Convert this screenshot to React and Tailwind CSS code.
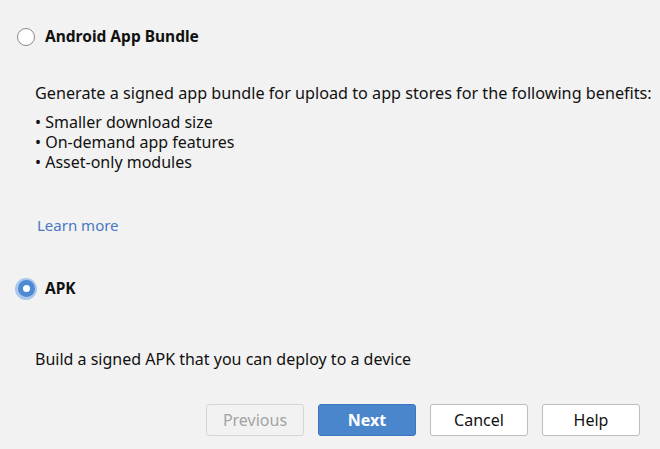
const Radio = ({ checked }) =>
  checked ? (
    <span className="flex h-[22px] w-[22px] items-center justify-center rounded-full bg-[#a9c8ec]">
      <span className="flex h-[17px] w-[17px] items-center justify-center rounded-full bg-[#4d8ad3]">
        <span className="h-[7px] w-[7px] rounded-full bg-white" />
      </span>
    </span>
  ) : (
    <span className="flex h-[22px] w-[22px] items-center justify-center">
      <span className="h-[18px] w-[18px] rounded-full border border-[#8a8a8a] bg-white" />
    </span>
  );

const Button = ({ children, variant }) => {
  const styles = {
    disabled: "border-[#d6d6d6] bg-[#f2f2f2] text-[#a3a3a3]",
    primary: "border-[#3d76bd] bg-[#4a86cb] text-white font-bold",
    normal: "border-[#bdbdbd] bg-white text-[#111]",
  };
  return (
    <button
      className={`h-[32px] w-[98px] rounded-[3px] border text-[16px] ${styles[variant]}`}
    >
      {children}
    </button>
  );
};

export default function App() {
  return (
    <div
      className="flex h-[449px] w-[660px] flex-col bg-[#f2f2f2] text-[16px] text-[#111]"
      style={{ fontFamily: '"Noto Sans", "Open Sans", sans-serif' }}
    >
      <div className="flex items-center gap-[8px] pl-[15px] pt-[25px]">
        <Radio />
        <span className="text-[15.5px] font-bold">Android App Bundle</span>
      </div>

      <div className="pl-[35px] pt-[35px] leading-[20px]">
        <p className="text-[16.2px]">
          Generate a signed app bundle for upload to app stores for the following benefits:
        </p>
        <ul className="mt-[9px]">
          <li>• Smaller download size</li>
          <li>• On-demand app features</li>
          <li>• Asset-only modules</li>
        </ul>
        <a className="mt-[43px] block pl-[2px] text-[15px] text-[#4a78c2]">Learn more</a>
      </div>

      <div className="flex items-center gap-[8px] pl-[15px] pt-[42px]">
        <Radio checked />
        <span className="text-[15.5px] font-bold">APK</span>
      </div>

      <p className="pl-[35px] pt-[48px] leading-[20px]">
        Build a signed APK that you can deploy to a device
      </p>

      <div className="flex justify-end gap-[14px] pr-[20px] pt-[35px]">
        <Button variant="disabled">Previous</Button>
        <Button variant="primary">Next</Button>
        <Button variant="normal">Cancel</Button>
        <Button variant="normal">Help</Button>
      </div>
    </div>
  );
}
